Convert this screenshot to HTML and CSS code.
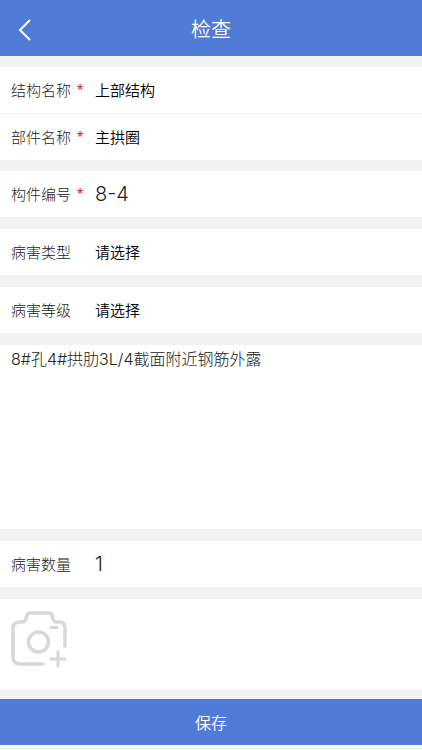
FILE: index.html
```html
<!DOCTYPE html>
<html lang="zh-CN">
<head>
    <meta charset="UTF-8">
    <meta name="viewport" content="width=device-width, initial-scale=1.0">
    <title>检查</title>
    <link rel="stylesheet" href="styles.css">
</head>
<body>
    <header class="header">
        <a class="back" href="#" aria-label="返回">
            <svg width="14" height="22" viewBox="0 0 14 22" fill="none" stroke="#fff" stroke-width="2">
                <path d="M12 1L2 11l10 10"/>
            </svg>
        </a>
        <h1>检查</h1>
    </header>
    <form class="form">
        <div class="group required">
            <div class="row">
                <label for="structure">结构名称</label>
                <select id="structure"><option>上部结构</option></select>
            </div>
            <div class="row">
                <label for="part">部件名称</label>
                <select id="part"><option>主拱圈</option></select>
            </div>
        </div>
        <div class="group required">
            <div class="row">
                <label for="code">构件编号</label>
                <input id="code" type="text" value="8-4">
            </div>
        </div>
        <div class="group">
            <div class="row">
                <label for="type">病害类型</label>
                <select id="type"><option>请选择</option></select>
            </div>
        </div>
        <div class="group">
            <div class="row">
                <label for="level">病害等级</label>
                <select id="level"><option>请选择</option></select>
            </div>
        </div>
        <div class="group">
            <textarea class="desc" aria-label="病害描述">8#孔4#拱肋3L/4截面附近钢筋外露</textarea>
        </div>
        <div class="group">
            <div class="row">
                <label for="count">病害数量</label>
                <input id="count" type="text" value="1">
            </div>
        </div>
        <div class="group photos">
            <button class="add-photo" type="button" aria-label="添加照片">
                <svg width="58" height="60" viewBox="0 0 58 60" fill="none" stroke="#d8d8d8" stroke-width="3.5" stroke-linecap="round" stroke-linejoin="round">
                    <path d="M32 54H9q-7 0-7-7V18q0-6 7-6h3q2 0 3-3l1-4q1-2 3-2h19q2 0 3 2l1 4q1 3 3 3h3q6 0 6 6v18"/>
                    <circle cx="27.500" cy="32" r="10"/>
                    <path stroke-width="3" d="M40 17.500h6"/>
                    <path stroke-width="3" d="M40 49h14M47 41.500v15"/>
                </svg>
            </button>
        </div>
        <button class="save" type="submit">保存</button>
    </form>
</body>
</html>
```
FILE: styles.css
```css
* {
    box-sizing: border-box;
}

body {
    margin: 0;
    background-color: #f2f2f2;
    color: #222;
    font-family: Inter, "Noto Sans CJK SC", sans-serif;
    font-size: 15px;
    font-weight: 300;
}

.header {
    display: grid;
    grid-template-columns: 48px 1fr 48px;
    align-items: center;
    height: 56px;
    background-color: #507bd7;
    color: #fff;
}

.header h1 {
    margin: 0;
    font-size: 20px;
    font-weight: 350;
    text-align: center;
}

.back {
    display: flex;
    padding: 4px 0 0 18px;
}

.form {
    display: flex;
    flex-direction: column;
}

.group {
    margin-top: 12px;
    background-color: #fff;
}

.required {
    margin-top: 11px;
}

.row {
    display: flex;
    align-items: center;
    height: 46px;
    padding: 0 11px;
}

.row + .row {
    height: 47px;
    border-top: 1px solid #ececec;
}

.row label {
    width: 84px;
    padding-top: 2px;
    line-height: 22px;
}

.required label::after {
    content: "*";
    margin-left: 6px;
    color: #d8202a;
    font-family: "Liberation Sans", sans-serif;
    font-size: 16px;
}

select,
input,
textarea {
    display: block;
    margin: 0;
    padding: 0;
    border: 0;
    outline: 0;
    border-radius: 0;
    background: none;
    color: #222;
    font: inherit;
    appearance: none;
}

select,
input {
    flex: 1;
    min-width: 0;
    height: 100%;
}

select {
    color: #000;
    font-weight: 350;
}

input {
    font-size: 20px;
}

.desc {
    width: 100%;
    height: 184px;
    padding: 2px 11px;
    font-size: 16px;
    line-height: 24px;
    resize: none;
}

.photos {
    padding: 11px 11px 20px;
}

.add-photo {
    display: block;
    padding: 0;
    border: 0;
    background: none;
}

.add-photo svg {
    display: block;
}

.save {
    height: 46px;
    margin-top: 9px;
    border: 0;
    background-color: #507bd7;
    color: #fff;
    font: inherit;
    font-size: 16px;
    font-weight: 350;
}

.form::after {
    content: "";
    height: 2px;
    background-color: #fff;
}
```
